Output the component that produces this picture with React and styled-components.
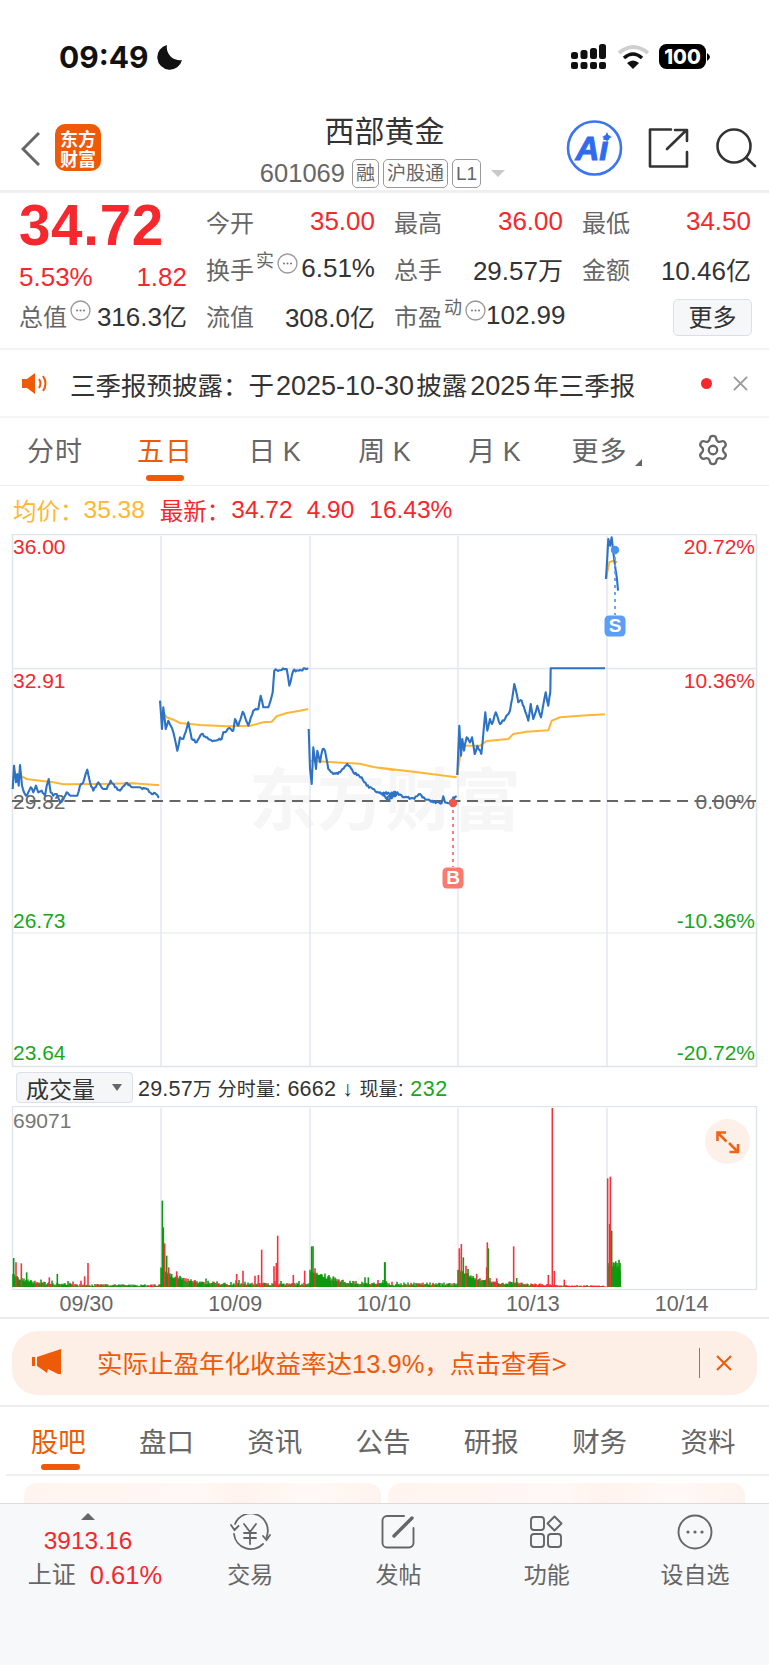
import React from "react";
import styled, { createGlobalStyle } from "styled-components";
import { Settings } from "lucide-react";

const RED = "#f5282d";
const GREEN = "#17a81a";
const ORANGE = "#ee5a07";
const FONT = `"Liberation Sans", "Noto Sans CJK SC", sans-serif`;

const Global = createGlobalStyle`
  html, body { margin: 0; padding: 0; background: #fff; }
  body { font-family: ${FONT}; -webkit-font-smoothing: antialiased; }
  * { box-sizing: border-box; }
`;

const Page = styled.div`
  width: 769px; height: 1665px; overflow: hidden;
  display: flex; flex-direction: column; background: #fff; color: #333;
`;

/* ---------- status bar ---------- */
const StatusBar = styled.div`
  height: 107px; padding: 43px 59px 0 59px;
  display: flex; justify-content: space-between; align-items: flex-start;
`;
const Clock = styled.div`display: flex; align-items: center; gap: 7px; height: 28px;`;
const Time = styled.span`font: 700 30px/28px Inter, ${FONT}; color: #111;`;
const StatusIcons = styled.div`margin-right: -1px; height: 28px;`;

const StatusGlyphs = () => (
  <svg width="142" height="28" viewBox="568 43 142 28">
    <g fill="#111">
      {[570, 579.5, 589, 598].map((x, i) => (
        <React.Fragment key={x}>
          <rect x={x} y={62} width={7} height={7} rx={2} />
          <rect x={x} y={[52, 50, 48, 44][i]} width={7} height={[7, 9, 11, 15][i]} rx={2.5} />
        </React.Fragment>
      ))}
    </g>
    <path d="M618 53 Q632 41 647 53" fill="none" stroke="#cfcfcf" strokeWidth="4" />
    <path d="M623 58 Q632 50 641 58" fill="none" stroke="#111" strokeWidth="3.5" />
    <path d="M626 63 L632 69 L638 63 Q632 58 626 63Z" fill="#111" />
    <rect x="658" y="44" width="47" height="25" rx="7.5" fill="#000" />
    <path d="M706 53 Q709 55 709 57 Q709 59 706 61Z" fill="#000" />
    <text x="681.5" y="64" textAnchor="middle" fontFamily="Inter, Liberation Sans" fontWeight="800" fontSize="20" fill="#fff">100</text>
  </svg>
);

/* ---------- header ---------- */
const Header = styled.div`
  height: 86px; padding-bottom: 3px; border-bottom: 3px solid #efefef;
  display: grid; grid-template-columns: 1fr auto 1fr;
`;
const HeaderLeft = styled.div`display: flex; align-items: flex-start; padding: 17px 0 0 21px; gap: 15px;`;
const BackIcon = styled.svg`display: block; margin-top: 8px;`;
const Logo = styled.div`
  width: 46px; height: 47px; border-radius: 10px; background: ${ORANGE}; color: #fff;
  display: flex; flex-direction: column; align-items: center; justify-content: center;
`;
const LogoLine = styled.span`display: block; font: 700 18px/20px "Noto Sans CJK SC", sans-serif; height: 20px;`;
const HeaderCenter = styled.div`display: flex; flex-direction: column; align-items: center; padding-top: 8px;`;
const Title = styled.div`font: 400 30px/34px ${FONT}; color: #333;`;
const CodeRow = styled.div`
  display: flex; align-items: center; gap: 4px; margin: 9px 4px 0 0; height: 30px; color: #777;
`;
const Code = styled.span`font-size: 25.5px; margin-right: 3px; color: #666;`;
const Tag = styled.span`
  height: 29px; padding: 0 3px; border: 1px solid #999; border-radius: 5px; font-size: 19px; line-height: 27px; color: #666;
`;
const Caret = styled.span`
  width: 0; height: 0; margin-left: 6px; border: 7px solid transparent; border-top: 7px solid #c9c9c9; border-bottom: 0;
`;
const HeaderRight = styled.div`display: flex; justify-content: flex-end; align-items: flex-start; padding: 13px 12px 0 0;`;

const HeaderIcons = () => (
  <svg width="192" height="60" viewBox="565 120 192 60">
    <circle cx="594.5" cy="148" r="26.5" fill="none" stroke="#3b74f4" strokeWidth="2.6" />
    <text x="592" y="160" textAnchor="middle" fontFamily="Liberation Sans" fontStyle="italic" fontWeight="700" fontSize="33" fill="#2f6bf0" stroke="#2f6bf0" strokeWidth="1">Ai</text>
    <path d="M607 132 l1.6 3.4 l3.4 1.6 l-3.4 1.6 l-1.6 3.4 l-1.6 -3.4 l-3.4 -1.6 l3.4 -1.6Z" fill="#2f6bf0" />
    <g fill="none" stroke="#333" strokeWidth="2.6" strokeLinecap="round" strokeLinejoin="round">
      <path d="M671 129.5 H650 V166.5 H687 V152" />
      <path d="M667 149 L686 130.5 M675 130 H687 V141" />
      <circle cx="734" cy="146" r="16.5" />
      <path d="M746.5 158 L755 166" />
    </g>
  </svg>
);

/* ---------- quote panel ---------- */
const Quote = styled.div`
  height: 157px; border-bottom: 2px solid #f3f3f3; padding-left: 19px; display: flex;
`;
const QuoteLeft = styled.div`width: 168px; padding-top: 3px; display: flex; flex-direction: column;`;
const BigPrice = styled.div`font: 700 56.5px/60px ${FONT}; color: ${RED}; letter-spacing: 0.7px;`;
const ChangeRow = styled.div`
  display: flex; justify-content: space-between; height: 30px; margin-top: 6px;
  font-size: 26px; line-height: 30px; color: ${RED};
`;
const TotalRow = styled.div`display: flex; align-items: center; justify-content: space-between; height: 30px; margin-top: 8px;`;
const QuoteGrid = styled.div`
  margin-left: 19px; padding-top: 5px; display: grid; grid-template-columns: repeat(3, 169px); column-gap: 19px;
  grid-auto-rows: 47px;
`;
const Cell = styled.div`display: flex; align-items: center; justify-content: space-between;`;
const LabelGroup = styled.div`display: flex; align-items: center; gap: 2px; height: 100%;`;
const Label = styled.span`font-size: 24px; color: #666; white-space: nowrap;`;
const Value = styled.span`font-size: 26px; color: ${p => (p.$up ? RED : "#333")}; white-space: nowrap;`;
const Unit = styled.span`font-size: 25px;`;
const Sup = styled.span`font-size: 18px; line-height: 20px; color: #666; align-self: flex-start; margin-top: ${p => p.$top}px;`;
const DotWrap = styled.span`display: block; width: 21px; height: 21px; align-self: flex-start; margin: ${p => p.$top}px 0 0 1px;`;
const MoreCell = styled.div`display: flex; justify-content: flex-end; align-items: center; padding-top: 3px;`;
const MoreButton = styled.div`
  width: 79px; height: 37px; margin-right: -1px; background: #f6f7f9; border: 1px solid #dcdfe4; border-radius: 5px;
  font-size: 24px; line-height: 35px; text-align: center; color: #333;
`;

const DotCircle = ({ top }) => (
  <DotWrap $top={top}>
    <svg width="21" height="21" viewBox="0 0 21 21">
      <circle cx="10.5" cy="10.5" r="9.5" fill="none" stroke="#999" strokeWidth="1.3" />
      <g fill="#777"><circle cx="7" cy="10.5" r="1" /><circle cx="10.5" cy="10.5" r="1" /><circle cx="14" cy="10.5" r="1" /></g>
    </svg>
  </DotWrap>
);

/* ---------- notice ---------- */
const Notice = styled.div`
  height: 68px; border-bottom: 2px solid #f5f5f5; display: flex; align-items: center; padding: 0 21px 0 22px;
`;
const NoticeText = styled.div`flex: 1; margin-left: 22px; font-size: 25.5px; color: #333; white-space: nowrap;`;
const NoticeNum = styled.span`font-size: 27px; margin: 0 ${p => p.$gap}px;`;
const RedDot = styled.span`width: 11px; height: 11px; border-radius: 50%; background: ${RED};`;
const CloseX = styled.span`
  display: block; margin-left: 21px; line-height: 0;
`;

/* ---------- period tabs ---------- */
const PeriodTabs = styled.div`
  height: 68px; border-bottom: 1px solid #eee; display: grid; grid-template-columns: repeat(5, 110px) 99px 1fr; align-items: center;
`;
const PeriodTab = styled.div`
  position: relative; height: 100%; padding-bottom: 4px; display: flex; align-items: center; justify-content: center; font-size: 27px;
  letter-spacing: 1px; color: ${p => (p.$active ? ORANGE : "#666")};
  ${p => p.$active && `&::after { content: ""; position: absolute; left: 36px; bottom: 4px; width: 38px; height: 6px; border-radius: 3px; background: ${ORANGE}; }`}
`;
const TinyCorner = styled.span`
  position: absolute; right: 7px; bottom: 19px; width: 0; height: 0;
  border-left: 7px solid transparent; border-bottom: 7px solid #666;
`;
const GearCell = styled.div`display: flex; justify-content: center; color: #666; padding: 0 0 4px 8px;`;

/* ---------- info ---------- */
const InfoRow = styled.div`height: 48px; display: flex; align-items: center; padding-left: 13px; font-size: 24.5px; white-space: nowrap;`;
const InfoItem = styled.span`color: ${p => p.$c}; margin-right: ${p => p.$gap}px;`;
const InfoLabel = styled.span`color: ${p => p.$c}; font-size: 23.5px; margin-right: ${p => p.$gap}px;`;

/* ---------- charts ---------- */
const ChartSvg = styled.svg`display: block; flex: none;`;

const VolumeBar = styled.div`height: 38px; display: flex; align-items: center; padding-left: 16px; padding-top: 1px; white-space: nowrap;`;
const VolumeSelect = styled.div`
  width: 117px; height: 31px; background: #f5f6f8; border: 1px solid #dde0e6; border-radius: 4px;
  display: flex; align-items: center; padding-left: 9px; font-size: 23px; color: #333; position: relative;
`;
const SelectCaret = styled.span`
  position: absolute; right: 10px; top: 11px; width: 0; height: 0;
  border: 5px solid transparent; border-top: 7px solid #666; border-bottom: 0;
`;
const VolumeInfo = styled.div`margin-left: 5px; font-size: 21.5px; color: #333; letter-spacing: .2px;`;
const VolumeCjk = styled.span`font-size: 19px;`;
const GreenNum = styled.span`color: ${GREEN}; letter-spacing: .6px;`;

const DateRow = styled.div`
  height: 27px; padding: 0 12px 2px; border-bottom: 2px solid #ebebeb;
  display: grid; grid-template-columns: repeat(5, 148.8px); align-items: center;
`;
const DateCell = styled.div`text-align: center; font-size: 21.5px; color: #666;`;

/* ---------- ad ---------- */
const AdArea = styled.div`height: 88px; padding: 12px 12px 0; border-bottom: 2px solid #ececec;`;
const AdBanner = styled.div`
  height: 64px; border-radius: 26px; background: #fdeee6; color: ${ORANGE}; display: flex; align-items: center; padding-left: 19px;
`;
const AdIcon = styled.svg`display: block; margin-top: -2px;`;
const AdText = styled.div`margin-left: 36px; padding-bottom: 4px; width: 604px; font-size: 25.5px; white-space: nowrap;`;
const AdRule = styled.span`width: 1px; height: 30px; margin-left: -2px; background: ${ORANGE};`;
const AdClose = styled.span`display: block; margin-left: 16px; line-height: 0;`;

/* ---------- content tabs ---------- */
const ContentTabs = styled.div`
  height: 69px; margin: 0 0 0 6px; padding: 0 0 2px; border-bottom: 2px solid #f0f0f0; display: grid; grid-template-columns: repeat(7, 108.3px);
`;
const ContentTab = styled.div`
  position: relative; padding-right: 4px; display: flex; align-items: center; justify-content: center; font-size: 27.5px;
  color: ${p => (p.$active ? ORANGE : "#666")};
  ${p => p.$active && `&::after { content: ""; position: absolute; left: 35px; bottom: 2px; width: 39px; height: 6px; border-radius: 3px; background: ${ORANGE}; }`}
`;
const Peek = styled.div`height: 27px; padding: 7px 24px 0; display: grid; grid-template-columns: 357px 357px; column-gap: 7px;`;
const PeekCard = styled.div`
  border-radius: 13px 13px 0 0;
  background: linear-gradient(90deg, #fff4f0 0%, #fff8f5 50%, #fff3ee 60%, #fff9f6 80%, #fff3ee 100%);
`;

/* ---------- bottom nav ---------- */
const BottomNav = styled.div`
  flex: 1; background: #f7f8fa; border-top: 1px solid #d9dbdf;
  display: grid; grid-template-columns: 176px repeat(4, 1fr); align-content: start;
`;
const IndexCell = styled.div`display: flex; flex-direction: column; align-items: center; padding-top: 9px;`;
const UpMark = styled.span`
  width: 0; height: 0; border: 7px solid transparent; border-bottom: 7px solid #666; border-top: 0;
`;
const IndexValue = styled.div`font-size: 24.5px; line-height: 30px; color: ${RED}; margin-top: 6px;`;
const IndexRow = styled.div`display: flex; align-items: center; gap: 14px; margin-top: 2px; line-height: 34px; padding-left: 14px;`;
const IndexName = styled.span`font-size: 24px; color: #666;`;
const IndexChange = styled.span`font-size: 25.5px; color: ${RED};`;
const NavItem = styled.div`display: flex; flex-direction: column; align-items: center; padding-top: 10px;`;
const NavIcon = styled.svg`display: block;`;
const NavLabel = styled.span`font-size: 23px; line-height: 30px; margin-top: 10px; color: #666;`;

/* ---------- data ---------- */
const z3 = pts => pts.map(([x, y]) => [x / 3, 530 + y / 3]);
const z4 = pts => pts.map(([x, y]) => [380 + x / 3, 530 + y / 3]);
function rng(seed) {
  let a = seed;
  return () => {
    a |= 0; a = (a + 0x6d2b79f5) | 0;
    let t = Math.imul(a ^ (a >>> 15), 1 | a);
    t = (t + Math.imul(t ^ (t >>> 7), 61 | t)) ^ t;
    return ((t ^ (t >>> 14)) >>> 0) / 4294967296;
  };
}
const jagRand = rng(11);
function jag(pts, amp = 1.2) {
  const out = [];
  for (let i = 0; i < pts.length - 1; i++) {
    const [x0, y0] = pts[i], [x1, y1] = pts[i + 1];
    const n = Math.max(1, Math.round(Math.abs(x1 - x0) / 1.2));
    for (let k = 0; k < n; k++) {
      const t = k / n, flat = Math.abs(y1 - y0) < 0.01;
      out.push([x0 + (x1 - x0) * t, y0 + (y1 - y0) * t + (flat || k === 0 ? 0 : (jagRand() - 0.5) * 2 * amp)]);
    }
  }
  out.push(pts[pts.length - 1]);
  return out;
}
const toPts = p => p.map(([x, y]) => `${x.toFixed(1)},${y.toFixed(1)}`).join(" ");

const priceLines = [
  z3([[38,780],[42,710],[48,760],[52,735],[56,770],[60,708],[66,770],[72,790],[78,800],[85,790],[92,775],[100,790],[108,770],[115,790],[125,785],[135,800],[140,770],[146,750],[152,790],[160,800],[170,795],[180,820],[190,810],[200,790],[215,800],[232,800],[240,770],[250,760],[262,722],[270,760],[280,785],[295,760],[310,780],[320,780],[332,755],[345,775],[360,785],[378,762],[395,775],[420,775],[440,780],[455,795],[465,792],[478,805]]),
  z3([[480,515],[486,600],[490,535],[497,600],[505,575],[512,590],[520,610],[532,665],[540,625],[550,630],[565,580],[575,630],[590,640],[605,615],[625,630],[645,635],[665,630],[670,610],[690,598],[700,605],[705,570],[715,590],[728,548],[745,590],[760,545],[775,540],[782,500],[790,535],[805,535],[818,490],[823,425],[860,420],[868,470],[880,425],[900,422],[925,419]]),
  [...z3([[926,600],[930,720],[935,765],[940,655],[948,720],[952,665],[960,700],[968,660],[975,665],[985,720],[1000,735],[1020,730],[1042,705],[1060,730],[1085,745],[1100,770],[1125,785],[1150,795],[1165,815],[1190,795]]),
   ...z4([[0,790],[20,810],[45,788],[70,805],[100,808],[120,795],[135,810],[160,820],[185,822],[190,802],[195,820],[210,822],[220,805],[230,803]])],
  z4([[232,738],[238,590],[243,680],[247,630],[252,665],[260,625],[270,640],[276,625],[284,675],[292,650],[304,675],[316,550],[322,605],[330,570],[336,585],[347,550],[360,585],[375,570],[390,545],[403,465],[415,520],[425,515],[445,575],[452,525],[460,570],[472,530],[483,565],[497,490],[505,530],[511,490],[512,418],[675,418]]),
  z4([[678,150],[685,30],[690,50],[695,25],[700,70],[707,125],[711,150],[714,185]]),
];
const avgLines = [
  z3([[38,745],[60,740],[80,750],[120,755],[160,760],[190,766],[300,765],[400,763],[478,769]]),
  z3([[490,550],[500,565],[520,572],[540,582],[600,588],[680,592],[750,590],[790,580],[815,578],[830,562],[860,552],[900,545],[925,540]]),
  [...z3([[930,695],[1000,700],[1080,704],[1120,714],[1180,723]]), ...z4([[0,716],[100,728],[230,745]])],
  z4([[232,738],[245,650],[300,650],[320,636],[385,630],[400,615],[440,608],[505,604],[515,575],[540,565],[600,560],[675,556]]),
  z4([[678,150],[688,100],[700,95],[712,100]]),
];
const VLINES = [161, 310, 458, 607];

const BASE = 1288;
const bars = (() => {
  const r = rng(42);
  let red = "", green = "";
  const starts = [13, 161, 310, 458, 607];
  const amp = [[10, 14], [15, 20], [15, 20], [15, 18]];
  for (let d = 0; d < 4; d++) {
    for (let x = starts[d]; x < starts[d + 1]; x += 1) {
      const off = x - starts[d];
      let h = amp[d][0] * Math.exp(-off / amp[d][1]) + 1 + r() * 3.5 + (r() > 0.85 ? r() * 3 : 0);
      if (d === 3 && off > 95) h = r() * 1.4 + 0.6;
      else if (d === 3 && off > 65) h = r() * 3 + 1;
      else if (d === 0 && off > 60) h = r() * 2.4 + 0.6;
      const seg = `M${x} ${BASE}V${(BASE - h).toFixed(1)}`;
      const redChance = d === 3 && off > 65 ? 0.1 : 0.62;
      if (r() > redChance && !(off < 22)) red += seg; else green += seg;
    }
  }
  return { red, green };
})();
const spikes5 = [[41,597,"g"],[48,610,"r"],[64,613,"r"],[80,640,"g"],[148,655,"r"],[172,645,"g"],[243,665,"r"],[254,652,"r"],[264,612,"r"],[487,425,"g"],[490,505,"g"],[494,553,"r"],[500,590,"g"],[506,625,"r"],[515,645,"g"],[530,637,"r"],[540,650,"g"],[710,645,"r"],[729,635,"r"],[765,650,"r"],[775,648,"r"],[785,572,"r"],[822,622,"r"],[829,612,"r"],[833,530,"r"],[880,648,"r"],[914,635,"r"],[935,562,"g"],[939,562,"g"],[945,628,"r"],[985,652,"g"],[1000,652,"g"],[1095,655,"g"],[1105,655,"g"],[1155,610,"g"]]
  .map(([x, y, c]) => [x / 3, 1060 + y / 3, c]);
const spikes6 = [[14,610,"g"],[238,568,"r"],[244,555,"r"],[250,595,"g"],[258,620,"r"],[264,630,"g"],[290,645,"r"],[320,625,"r"],[322,550,"r"],[325,568,"g"],[350,658,"r"],[401,562,"r"],[410,657,"g"],[505,648,"r"],[517,147,"r"],[523,636,"r"],[553,662,"r"],[683,358,"r"],[691,353,"r"],[689,495,"g"],[695,515,"g"],[700,610,"g"],[707,607,"g"],[712,625,"g"],[717,602,"g"],[720,635,"g"]]
  .map(([x, y, c]) => [380 + x / 3, 1060 + y / 3, c]);
const endFill = Array.from({ length: 13 }, (_, i) => [608 + i, 1264 + (i % 3) * 3, "g"]);
const allSpikes = [...endFill, ...spikes5, ...spikes6];

const labelL = [["36.00", 547, RED], ["32.91", 681, RED], ["29.82", 802, "#666"], ["26.73", 921, GREEN], ["23.64", 1053, GREEN]];
const labelR = [["20.72%", 547, RED], ["10.36%", 681, RED], ["0.00%", 802, "#666"], ["-10.36%", 921, GREEN], ["-20.72%", 1053, GREEN]];

const PriceChart = () => (
  <ChartSvg width="769" height="534" viewBox="0 535 769 534">
    <text x="385" y="826" textAnchor="middle" fontFamily="Noto Sans CJK SC" fontWeight="700" fontSize="68" fill="#f6f6f6">东方财富</text>
    <rect x="12.5" y="535.5" width="744" height="532" fill="none" stroke="#dfe3ea" strokeWidth="1.5" />
    <g stroke="#e3e7ef" strokeWidth="1.5">
      {VLINES.map(x => <line key={x} x1={x} x2={x} y1="537" y2="1067" />)}
      <line x1="12" x2="757" y1="669.5" y2="669.5" />
      <line x1="12" x2="757" y1="934" y2="934" strokeWidth="1" />
    </g>
    <g fontFamily="Liberation Sans" fontSize="21">
      {labelL.map(([t, y, c]) => <text key={t} x="13" y={y + 7.5} fill={c}>{t}</text>)}
      {labelR.map(([t, y, c]) => <text key={t} x="755" y={y + 7.5} fill={c} textAnchor="end">{t}</text>)}
    </g>
    <line x1="12" x2="756" y1="802" y2="802" stroke="#666" strokeWidth="1.8" strokeDasharray="11 6.5" />
    <g fill="none" stroke="#ffb733" strokeWidth="2" strokeLinejoin="round">
      {avgLines.map((p, i) => <polyline key={i} points={toPts(p)} />)}
    </g>
    <g fill="none" stroke="#2d72c4" strokeWidth="2.1" strokeLinejoin="round">
      {priceLines.map((p, i) => <polyline key={i} points={toPts(jag(p))} />)}
    </g>
    <line x1="615" x2="615" y1="551" y2="616" stroke="#5b9ef5" strokeWidth="1.8" strokeDasharray="3 4" />
    <circle cx="615" cy="551" r="4.2" fill="#4a90f0" />
    <rect x="604.5" y="616.5" width="21" height="21" rx="4.5" fill="#5b9ef5" />
    <text x="615" y="633" textAnchor="middle" fontFamily="Liberation Sans" fontWeight="700" fontSize="19" fill="#fff">S</text>
    <line x1="453" x2="453" y1="804" y2="868" stroke="#f5736a" strokeWidth="1.8" strokeDasharray="3 4" />
    <circle cx="453" cy="804" r="4.2" fill="#f0564a" />
    <rect x="442.5" y="868.5" width="21" height="21" rx="4.5" fill="#fa7a6e" />
    <text x="453" y="885" textAnchor="middle" fontFamily="Liberation Sans" fontWeight="700" fontSize="19" fill="#fff">B</text>
  </ChartSvg>
);

const VolumeChart = () => (
  <ChartSvg width="769" height="186" viewBox="0 1107 769 186">
    <rect x="12.5" y="1107.5" width="744" height="183" fill="none" stroke="#dfe3ea" strokeWidth="1.3" />
    <g stroke="#e3e7ef" strokeWidth="1.5">
      {VLINES.map(x => <line key={x} x1={x} x2={x} y1="1109" y2="1289" />)}
    </g>
    <text x="13" y="1129" fontFamily="Liberation Sans" fontSize="21" fill="#777">69071</text>
    <path d={bars.red} stroke="#f5282d" strokeWidth="1.5" fill="none" />
    <path d={bars.green} stroke="#0b9a0b" strokeWidth="1.5" fill="none" />
    <g strokeWidth="1.6">
      {allSpikes.filter(s => s[2] === "g").map(([x, y], i) => <line key={i} x1={x} x2={x} y1={BASE} y2={y} stroke="#0b9a0b" />)}
      {allSpikes.filter(s => s[2] === "r").map(([x, y], i) => <line key={i} x1={x} x2={x} y1={BASE} y2={y} stroke="#f5323a" />)}
    </g>
    <circle cx="727.5" cy="1142.5" r="22.5" fill="#fdf0e9" />
    <g fill="none" stroke="#f0641a" strokeWidth="2.6">
      <path d="M717.5 1142 V1133.5 H726 M717.5 1133.5 L726.5 1142.5" />
      <path d="M738 1145 V1153 H729.5 M738 1153 L729 1144" />
    </g>
  </ChartSvg>
);

const Cross = ({ size, color, width = 2 }) => (
  <svg width={size} height={size} viewBox="0 0 16 16">
    <path d="M1 1 L15 15 M15 1 L1 15" stroke={color} strokeWidth={width} fill="none" />
  </svg>
);

const periodTabs = ["分时", "五日", "日\u2009K", "周\u2009K", "月\u2009K", "更多"];
const contentTabs = ["股吧", "盘口", "资讯", "公告", "研报", "财务", "资料"];

export default function App() {
  return (
    <Page>
      <Global />
      <StatusBar>
        <Clock>
          <Time>09:49</Time>
          <svg width="26" height="25" viewBox="0 0 26 25">
            <path d="M11 0 A12.5 12.5 0 1 0 26 15 A13 13 0 0 1 11 0Z" fill="#111" />
          </svg>
        </Clock>
        <StatusIcons><StatusGlyphs /></StatusIcons>
      </StatusBar>

      <Header>
        <HeaderLeft>
          <BackIcon width="19" height="34" viewBox="0 0 19 34">
            <path d="M18 1 L2 17 L18 33" fill="none" stroke="#666" strokeWidth="3" />
          </BackIcon>
          <Logo><LogoLine>东方</LogoLine><LogoLine>财富</LogoLine></Logo>
        </HeaderLeft>
        <HeaderCenter>
          <Title>西部黄金</Title>
          <CodeRow>
            <Code>601069</Code>
            <Tag>融</Tag>
            <Tag>沪股通</Tag>
            <Tag>L1</Tag>
            <Caret />
          </CodeRow>
        </HeaderCenter>
        <HeaderRight><HeaderIcons /></HeaderRight>
      </Header>

      <Quote>
        <QuoteLeft>
          <BigPrice>34.72</BigPrice>
          <ChangeRow><span>5.53%</span><span>1.82</span></ChangeRow>
          <TotalRow>
            <LabelGroup><Label>总值</Label><DotCircle top={0} /></LabelGroup>
            <Value>316.3<Unit>亿</Unit></Value>
          </TotalRow>
        </QuoteLeft>
        <QuoteGrid>
          <Cell><Label>今开</Label><Value $up>35.00</Value></Cell>
          <Cell><Label>最高</Label><Value $up>36.00</Value></Cell>
          <Cell><Label>最低</Label><Value $up>34.50</Value></Cell>
          <Cell>
            <LabelGroup><Label>换手</Label><Sup $top={6}>实</Sup><DotCircle top={8} /></LabelGroup>
            <Value>6.51%</Value>
          </Cell>
          <Cell><Label>总手</Label><Value>29.57<Unit>万</Unit></Value></Cell>
          <Cell><Label>金额</Label><Value>10.46<Unit>亿</Unit></Value></Cell>
          <Cell><Label>流值</Label><Value>308.0<Unit>亿</Unit></Value></Cell>
          <Cell>
            <LabelGroup><Label>市盈</Label><Sup $top={6}>动</Sup><DotCircle top={8} /></LabelGroup>
            <Value>102.99</Value>
          </Cell>
          <MoreCell><MoreButton>更多</MoreButton></MoreCell>
        </QuoteGrid>
      </Quote>

      <Notice>
        <svg width="26" height="21" viewBox="0 0 26 21">
          <path d="M0 6 H5 L13 0 V21 L5 15 H0Z" fill={ORANGE} />
          <path d="M17 6 Q20 10.5 17 15 M21 3 Q26 10.5 21 18" fill="none" stroke={ORANGE} strokeWidth="2" />
        </svg>
        <NoticeText>
          三季报预披露：于<NoticeNum $gap={2}>2025-10-30</NoticeNum>披露<NoticeNum $gap={3}>2025</NoticeNum>年三季报
        </NoticeText>
        <RedDot />
        <CloseX><Cross size={15} color="#999" /></CloseX>
      </Notice>

      <PeriodTabs>
        {periodTabs.map((t, i) => (
          <PeriodTab key={t} $active={i === 1}>
            {t}
            {t === "更多" && <TinyCorner />}
          </PeriodTab>
        ))}
        <GearCell><Settings size={34} strokeWidth={1.6} /></GearCell>
      </PeriodTabs>

      <InfoRow>
        <InfoLabel $c="#ffb733" $gap={0}>均价：</InfoLabel>
        <InfoItem $c="#ffb733" $gap={15}>35.38</InfoItem>
        <InfoLabel $c={RED} $gap={1}>最新：</InfoLabel>
        <InfoItem $c={RED} $gap={14}>34.72</InfoItem>
        <InfoItem $c={RED} $gap={15}>4.90</InfoItem>
        <InfoItem $c={RED} $gap={0}>16.43%</InfoItem>
      </InfoRow>

      <PriceChart />

      <VolumeBar>
        <VolumeSelect>成交量<SelectCaret /></VolumeSelect>
        <VolumeInfo>
          29.57<VolumeCjk>万 分时量</VolumeCjk>: 6662 ↓ <VolumeCjk>现量</VolumeCjk>: <GreenNum>232</GreenNum>
        </VolumeInfo>
      </VolumeBar>

      <VolumeChart />

      <DateRow>
        {["09/30", "10/09", "10/10", "10/13", "10/14"].map(d => <DateCell key={d}>{d}</DateCell>)}
      </DateRow>

      <AdArea>
        <AdBanner>
          <AdIcon width="30" height="26" viewBox="31 1350 30 26">
            <path d="M32 1358 H35 V1367 H32Z M37 1358 L58 1351 L61 1350 V1375 L58 1375 L48 1370 L47 1374 L43 1371 L37 1367Z" fill={ORANGE} />
          </AdIcon>
          <AdText>实际止盈年化收益率达13.9%，点击查看&gt;</AdText>
          <AdRule />
          <AdClose><Cross size={16} color={ORANGE} /></AdClose>
        </AdBanner>
      </AdArea>

      <ContentTabs>
        {contentTabs.map((t, i) => <ContentTab key={t} $active={i === 0}>{t}</ContentTab>)}
      </ContentTabs>

      <Peek><PeekCard /><PeekCard /></Peek>

      <BottomNav>
        <IndexCell>
          <UpMark />
          <IndexValue>3913.16</IndexValue>
          <IndexRow><IndexName>上证</IndexName><IndexChange>0.61%</IndexChange></IndexRow>
        </IndexCell>
        <NavItem>
          <NavIcon width="42" height="36" viewBox="229 1514 42 36" fill="none" stroke="#666" strokeWidth="1.8" strokeLinecap="round">
            <path d="M235 1524 A17 17 0 0 1 266.5 1537 M231 1525 L234.5 1530 L238.5 1526 M263 1536 L266.5 1540 L270 1535 M263 1544 A17 17 0 0 1 234 1534" />
            <path d="M244 1524 L250 1532 L256 1524 M244 1533 H256 M244 1538 H256 M250 1532 V1544" />
          </NavIcon>
          <NavLabel>交易</NavLabel>
        </NavItem>
        <NavItem>
          <NavIcon width="36" height="36" viewBox="380 1514 36 36" fill="none" stroke="#666" strokeWidth="1.9" strokeLinecap="round">
            <path d="M404 1516 H387 a4.5 4.5 0 0 0 -4.5 4.5 V1543 a4.5 4.5 0 0 0 4.5 4.5 H409 a4.5 4.5 0 0 0 4.5 -4.5 V1528" />
            <path d="M394 1536 L412 1518" strokeWidth="3.4" />
          </NavIcon>
          <NavLabel>发帖</NavLabel>
        </NavItem>
        <NavItem>
          <NavIcon width="36" height="36" viewBox="529 1514 36 36" fill="none" stroke="#666" strokeWidth="1.9">
            <rect x="531" y="1517" width="13" height="13" rx="3" />
            <rect x="531" y="1534" width="13" height="13" rx="3" />
            <rect x="548" y="1534" width="13" height="13" rx="3" />
            <path d="M554.5 1516.5 L561.5 1523.5 L554.5 1530.5 L547.5 1523.5Z" strokeLinejoin="round" />
          </NavIcon>
          <NavLabel>功能</NavLabel>
        </NavItem>
        <NavItem>
          <NavIcon width="36" height="36" viewBox="677 1514 36 36" fill="none" stroke="#666" strokeWidth="1.9">
            <circle cx="695" cy="1532" r="16.5" />
            <g fill="#666" stroke="none"><circle cx="688" cy="1532" r="1.6" /><circle cx="695" cy="1532" r="1.6" /><circle cx="702" cy="1532" r="1.6" /></g>
          </NavIcon>
          <NavLabel>设自选</NavLabel>
        </NavItem>
      </BottomNav>
    </Page>
  );
}
